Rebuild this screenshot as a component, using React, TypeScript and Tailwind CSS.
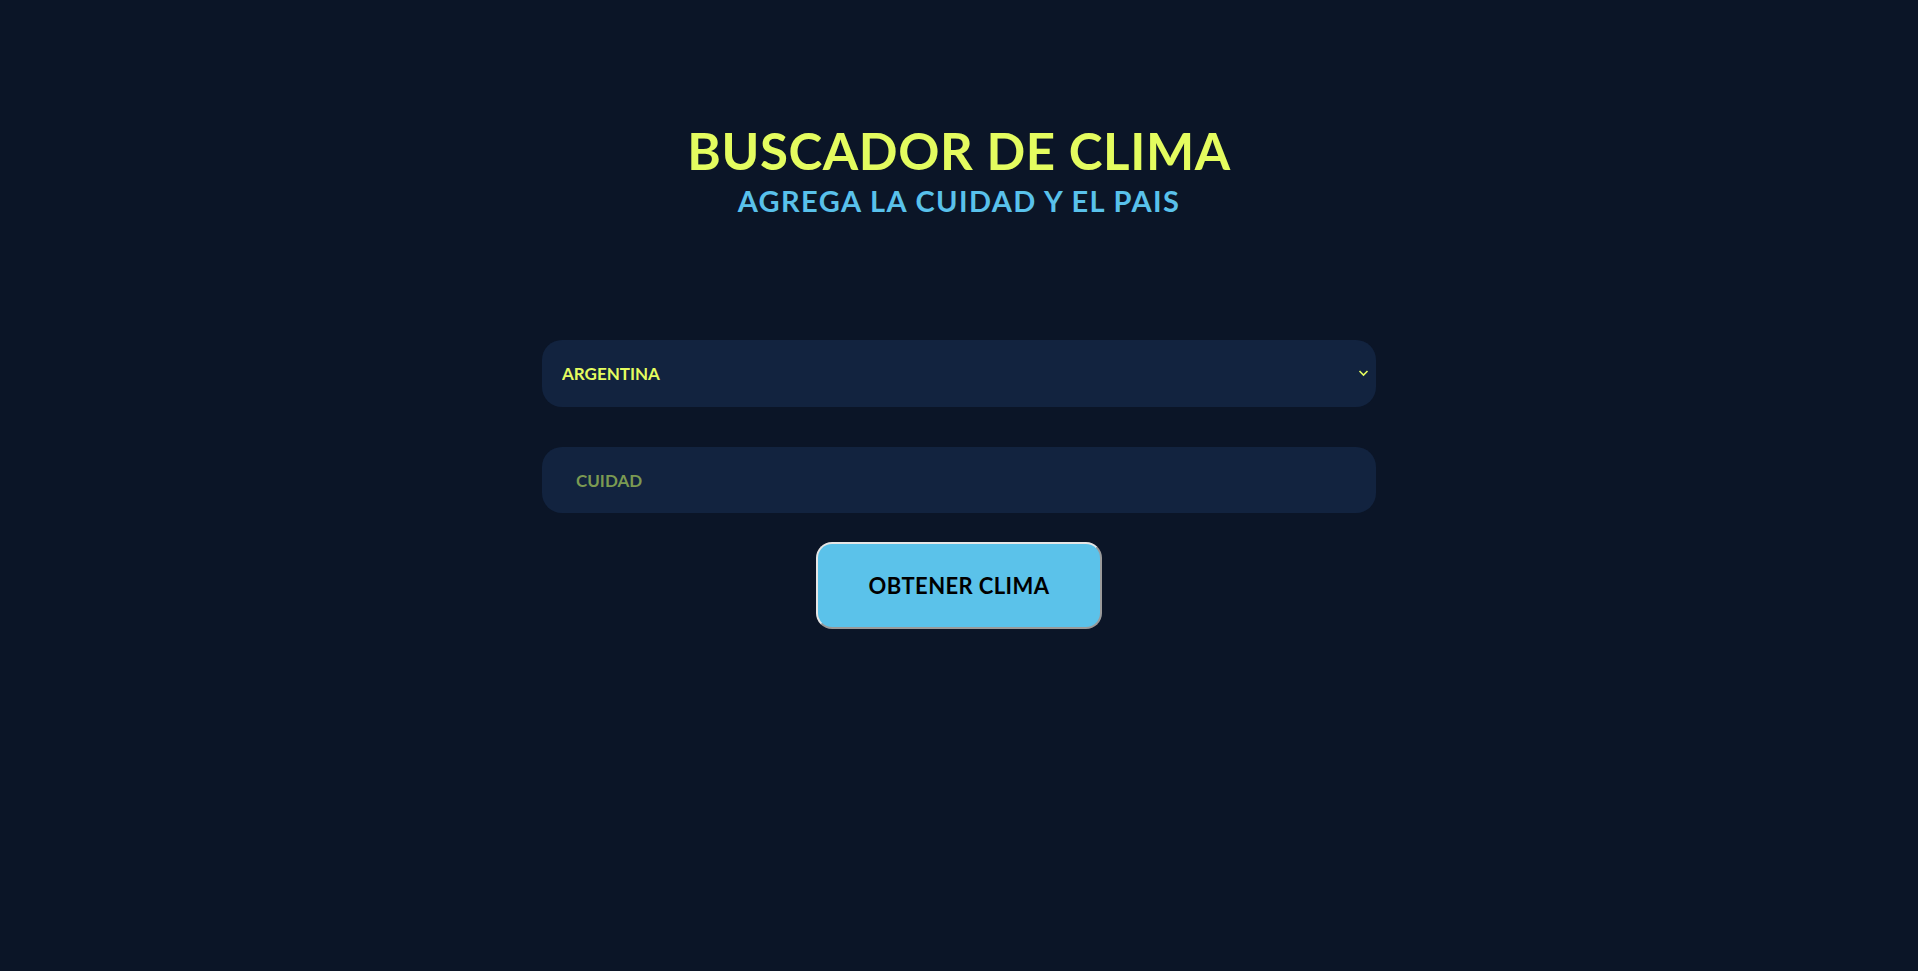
import React, { useState } from 'react';

const countries = ['Argentina', 'Chile', 'Colombia', 'México', 'Perú', 'España'];

export default function App() {
  const [country, setCountry] = useState('Argentina');
  const [city, setCity] = useState('');

  return (
    <div className="min-h-screen bg-[#0b1527] font-['Lato',sans-serif] flex flex-col items-center">
      {/* Header */}
      <header className="pt-[125px] text-center">
        <h1 className="text-[51px] leading-[52px] font-bold tracking-[0.6px] text-[#e4fc5f] uppercase">Buscador de clima</h1>
        <h2 className="mt-[6px] text-[29px] leading-[36px] font-bold tracking-[1.4px] text-[#59c1eb] uppercase">Agrega la cuidad y el pais</h2>
      </header>

      {/* Form */}
      <form className="w-[834px] mt-[121px] flex flex-col items-center" onSubmit={(e) => e.preventDefault()}>
        <div className="relative w-full">
          <select
            value={country}
            onChange={(e) => setCountry(e.target.value)}
            className="w-full h-[67px] appearance-none rounded-[20px] bg-[#12233f] px-5 text-[17px] font-bold uppercase text-[#e4fc5f] outline-none"
          >
            {countries.map((c) => (
              <option key={c} value={c}>{c}</option>
            ))}
          </select>
          <svg
            className="pointer-events-none absolute right-[7px] top-[29px] w-[11px] h-[8px]"
            viewBox="0 0 11 8"
            fill="none"
            stroke="#e4fc5f"
            strokeWidth="1.6"
          >
            <path d="M1.5 2 L5.5 6 L9.5 2" />
          </svg>
        </div>

        <input
          type="text"
          value={city}
          onChange={(e) => setCity(e.target.value)}
          placeholder="CUIDAD"
          className="mt-[40px] w-full h-[66px] rounded-[20px] bg-[#12233f] px-[34px] text-[17px] font-bold uppercase text-[#e4fc5f] placeholder:text-[#7b9a52] outline-none"
        />

        <button
          type="submit"
          className="mt-[29px] w-[286px] h-[87px] rounded-[16px] border-2 border-t-[#e6e6e6] border-l-[#e6e6e6] border-r-[#9a9a9a] border-b-[#9a9a9a] bg-[#5bc2ea] text-[22px] font-bold tracking-[0.4px] uppercase text-black"
        >
          Obtener clima
        </button>
      </form>
    </div>
  );
}
